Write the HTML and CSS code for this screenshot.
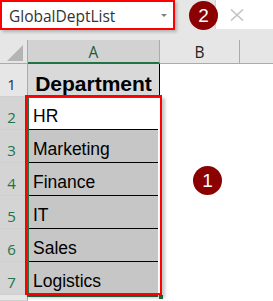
FILE: index.html
```html
<!DOCTYPE html>
<html>
<head>
<meta charset="utf-8">
<link rel="stylesheet" href="styles.css">
</head>
<body>
<div class="app">
  <header class="topbar">
    <div class="namebox">
      <span class="name">GlobalDeptList</span>
      <svg class="caret" width="6" height="3" viewBox="0 0 6 3"><path d="M0 0H6L3 3Z" fill="#7f7f7f"/></svg>
    </div>
    <div class="formula">
      <svg class="cancel" width="14" height="12" viewBox="0 0 14 12"><path d="M1 0.5L13 11.5M13 0.5L1 11.5" stroke="#c4c4c4" stroke-width="1.6" fill="none"/></svg>
    </div>
  </header>
  <div class="sheet">
    <div class="corner"><svg width="17" height="16" viewBox="0 0 17 16"><path d="M16 0V16H0Z" fill="#b4b4b4"/></svg></div>
    <div class="colhead sel">A</div>
    <div class="colhead">B</div>
    <div class="colhead rest"></div>

    <div class="rowhead">1</div><div class="cell title">Department</div><div class="cell"></div><div class="cell"></div>
    <div class="rowhead sel">2</div><div class="cell item active">HR</div><div class="cell"></div><div class="cell"></div>
    <div class="rowhead sel">3</div><div class="cell item">Marketing</div><div class="cell"></div><div class="cell"></div>
    <div class="rowhead sel">4</div><div class="cell item">Finance</div><div class="cell"></div><div class="cell"></div>
    <div class="rowhead sel">5</div><div class="cell item">IT</div><div class="cell"></div><div class="cell"></div>
    <div class="rowhead sel">6</div><div class="cell item">Sales</div><div class="cell"></div><div class="cell"></div>
    <div class="rowhead sel">7</div><div class="cell item last">Logistics</div><div class="cell"></div><div class="cell"></div>
    <div class="rowhead"></div><div class="cell"></div><div class="cell"></div><div class="cell"></div>
  </div>

  <div class="selection"></div>
  <div class="fillhandle"></div>
  <div class="callout"></div>
  <div class="badge badge-name">2</div>
  <div class="badge badge-range">1</div>
</div>
</body>
</html>
```

FILE: styles.css
```css
* { box-sizing: border-box; }
html, body { margin: 0; padding: 0; background: #fff; }
.app {
  position: relative;
  width: 273px;
  height: 301px;
  overflow: hidden;
}
.topbar {
  display: flex;
  align-items: flex-start;
  height: 40px;
  background: #e6e6e6;
}
.namebox {
  display: flex;
  align-items: center;
  width: 175px;
  height: 30px;
  padding: 0 6px 0 7px;
  border: 2px solid #ff0000;
  background: #fff;
  box-shadow: 2px 2px 3px rgba(0,0,0,0.22);
}
.name {
  font-family: "Open Sans", "Noto Sans", sans-serif;
  font-size: 15.5px;
  color: #333;
  line-height: 20px;
  padding-top: 1px;
}
.caret { margin-left: auto; }
.formula {
  display: flex;
  align-items: center;
  flex: 1;
  height: 29px;
  margin-left: 40px;
  padding-left: 14px;
  background: #fff;
  border-left: 1px solid #d4d4d4;
}
.sheet {
  display: grid;
  grid-template-columns: 28px 132px 80px 1fr;
  grid-template-rows: 24px repeat(7, 33px) 1fr;
  height: 261px;
}
.corner {
  display: flex;
  align-items: flex-end;
  justify-content: flex-end;
  padding: 0 3px 2px 0;
  background: #e6e6e6;
  border-right: 1px solid #ababab;
  border-bottom: 1px solid #ababab;
}
.colhead {
  display: flex;
  align-items: center;
  justify-content: center;
  background: #e6e6e6;
  border-right: 1px solid #ababab;
  border-bottom: 1px solid #ababab;
  font-family: "Open Sans", "Noto Sans", sans-serif;
  font-size: 15.5px;
  color: #222;
  padding-top: 1px;
}
.colhead.sel {
  background: #d2d2d2;
  color: #1e5b3a;
  border-bottom: 2px solid #217346;
}
.colhead.rest { border-right: none; }
.rowhead {
  display: flex;
  align-items: flex-end;
  justify-content: center;
  padding: 0 4px 3px 0;
  background: #e6e6e6;
  border-right: 1px solid #ababab;
  border-bottom: 1px solid #cfcfcf;
  font-family: "Open Sans", "Noto Sans", sans-serif;
  font-size: 15px;
  line-height: 18px;
  color: #1f2f55;
}
.rowhead.sel {
  background: #d4d4d4;
  color: #217346;
}
.cell {
  background: #fff;
}
.cell.title {
  display: flex;
  align-items: flex-end;
  justify-content: center;
  padding-bottom: 1px;
  background: #d9d9d9;
  border-right: 1px solid #000;
  font-family: "Liberation Sans", Arial, sans-serif;
  font-weight: bold;
  font-size: 21px;
  line-height: 24px;
  color: #000;
}
.cell.item {
  display: flex;
  align-items: flex-end;
  padding: 0 0 3px 4px;
  margin: 0 2px 0 1px;
  background: #c6c6c6;
  border-bottom: 1px solid #000;
  font-family: "Liberation Sans", Arial, sans-serif;
  font-size: 17.5px;
  line-height: 20px;
  color: #000;
}
.cell.item.active { background: #fff; }
.cell.item.last { border-bottom: none; padding-bottom: 4px; }
.selection {
  position: absolute;
  left: 27px;
  top: 96px;
  width: 135px;
  height: 201px;
  border: 2px solid #217346;
}
.fillhandle {
  position: absolute;
  left: 158px;
  top: 294px;
  width: 6px;
  height: 6px;
  background: #217346;
  border: 1px solid #fff;
}
.callout {
  position: absolute;
  left: 25px;
  top: 95px;
  width: 137px;
  height: 200px;
  border: 2px solid #ff0000;
  box-shadow: 3px 3px 3px rgba(0,0,0,0.22);
}
.badge {
  position: absolute;
  width: 29px;
  height: 29px;
  border-radius: 50%;
  background: #8b0000;
  color: #fff;
  display: flex;
  align-items: center;
  justify-content: center;
  font-family: "Liberation Sans", Arial, sans-serif;
  font-size: 19px;
  line-height: 1;
}
.badge-name { left: 189px; top: 1px; }
.badge-range { left: 193px; top: 166px; }
```
